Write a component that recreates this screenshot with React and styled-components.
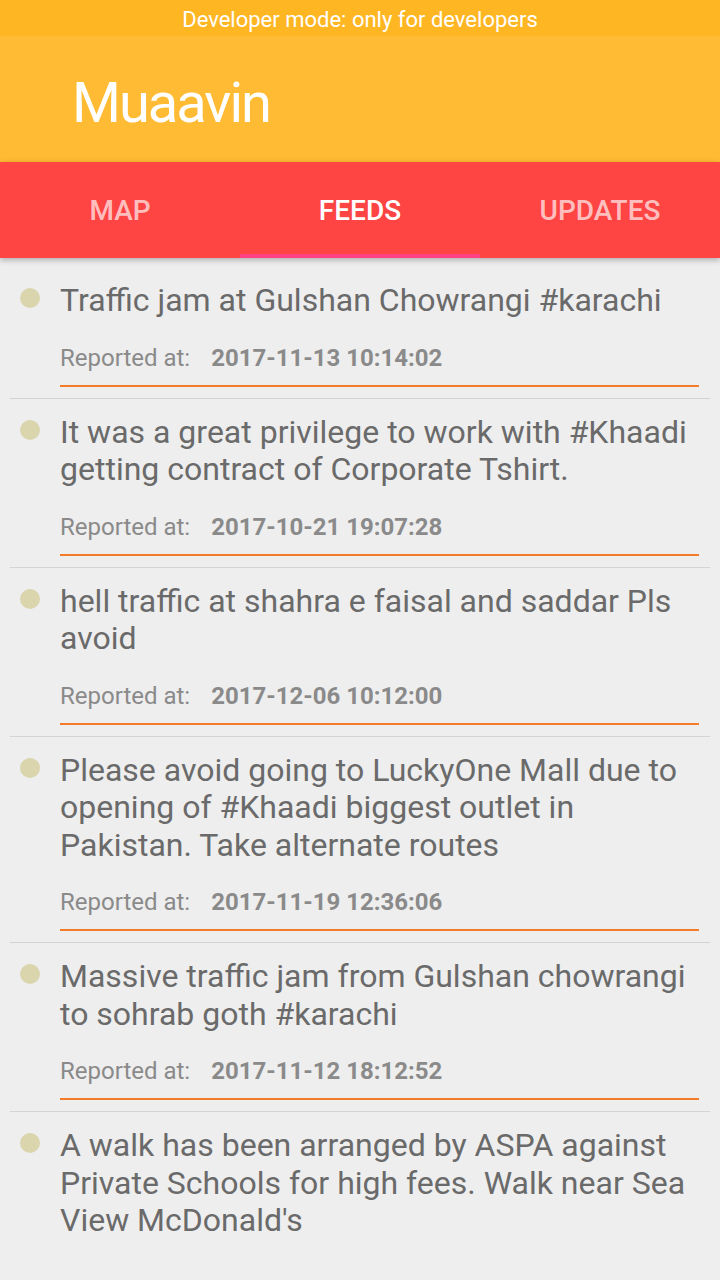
import React from 'react';
import styled, { createGlobalStyle } from 'styled-components';

const GlobalStyle = createGlobalStyle`
  html, body {
    margin: 0;
    padding: 0;
    background: #eeeeee;
    font-family: Roboto, "Liberation Sans", sans-serif;
  }
  * {
    box-sizing: border-box;
  }
`;

const Page = styled.div`
  width: 720px;
  height: 1280px;
  background: #eeeeee;
  display: flex;
  flex-direction: column;
  overflow: hidden;
`;

const DevBar = styled.div`
  height: 36px;
  flex-shrink: 0;
  background: #ffb623;
  color: #ffffff;
  font-size: 22px;
  display: flex;
  align-items: center;
  justify-content: center;
  padding-top: 2px;
`;

const AppBar = styled.div`
  height: 126px;
  flex-shrink: 0;
  background: #ffbb33;
  display: flex;
  align-items: center;
  padding: 8px 0 0 72px;
`;

const AppTitle = styled.h1`
  margin: 0;
  color: #ffffff;
  font-size: 56px;
  font-weight: 400;
  letter-spacing: -2px;
`;

const TabBar = styled.div`
  height: 96px;
  flex-shrink: 0;
  background: #ff4444;
  display: flex;
  position: relative;
  z-index: 1;
  box-shadow: 0 2px 6px rgba(0, 0, 0, 0.28);
`;

const Tab = styled.div`
  flex: 1;
  display: flex;
  align-items: center;
  justify-content: center;
  font-size: 28px;
  font-weight: 500;
  color: ${(p) => (p.$active ? '#ffffff' : 'rgba(255, 255, 255, 0.68)')};
  border-bottom: 4px solid ${(p) => (p.$active ? '#ff4081' : 'transparent')};
  padding-top: 5px;
`;

const List = styled.div`
  padding-top: 9px;
  display: flex;
  flex-direction: column;
`;

const Item = styled.div`
  margin: 0 10px;
  padding-top: 14px;
  display: flex;
  border-bottom: ${(p) => (p.$last ? 'none' : '1px solid #d4d4d4')};
`;

const Bullet = styled.div`
  width: 20px;
  height: 20px;
  border-radius: 50%;
  background: #dad5ad;
  flex-shrink: 0;
  margin: 7px 20px 0 10px;
`;

const Body = styled.div`
  flex: 1;
  margin-right: 11px;
`;

const Title = styled.div`
  font-size: 32px;
  line-height: 37.5px;
  color: #6a6a6a;
  padding-top: 1px;
`;

const Reported = styled.div`
  margin-top: 23px;
  font-size: 24px;
  line-height: 30px;
  color: #8a8a8a;
  display: flex;
  gap: 21px;
`;

const Stamp = styled.span`
  font-weight: 700;
`;

const Rule = styled.div`
  height: 2px;
  background: #f47c28;
  margin: 12px 0 11px;
`;

const feeds = [
  { text: 'Traffic jam at Gulshan Chowrangi #karachi', at: '2017-11-13 10:14:02' },
  { text: 'It was a great privilege to work with #Khaadi getting contract of Corporate Tshirt.', at: '2017-10-21 19:07:28' },
  { text: 'hell traffic at shahra e faisal and saddar Pls avoid', at: '2017-12-06 10:12:00' },
  { text: 'Please avoid going to LuckyOne Mall due to opening of #Khaadi biggest outlet in Pakistan. Take alternate routes', at: '2017-11-19 12:36:06' },
  { text: 'Massive traffic jam from Gulshan chowrangi to sohrab goth #karachi', at: '2017-11-12 18:12:52' },
  // last one runs past the bottom of the screen, only the text shows
  { text: "A walk has been arranged by ASPA against Private Schools for high fees. Walk near Sea View McDonald's" },
];

function App() {
  return (
    <Page>
      <GlobalStyle />
      <DevBar>Developer mode: only for developers</DevBar>
      <AppBar>
        <AppTitle>Muaavin</AppTitle>
      </AppBar>
      <TabBar>
        <Tab>MAP</Tab>
        <Tab $active>FEEDS</Tab>
        <Tab>UPDATES</Tab>
      </TabBar>
      <List>
        {feeds.map((f, i) => (
          <Item key={i} $last={i === feeds.length - 1}>
            <Bullet />
            <Body>
              <Title>{f.text}</Title>
              {f.at && (
                <>
                  <Reported>
                    <span>Reported at:</span>
                    <Stamp>{f.at}</Stamp>
                  </Reported>
                  <Rule />
                </>
              )}
            </Body>
          </Item>
        ))}
      </List>
    </Page>
  );
}

export default App;
